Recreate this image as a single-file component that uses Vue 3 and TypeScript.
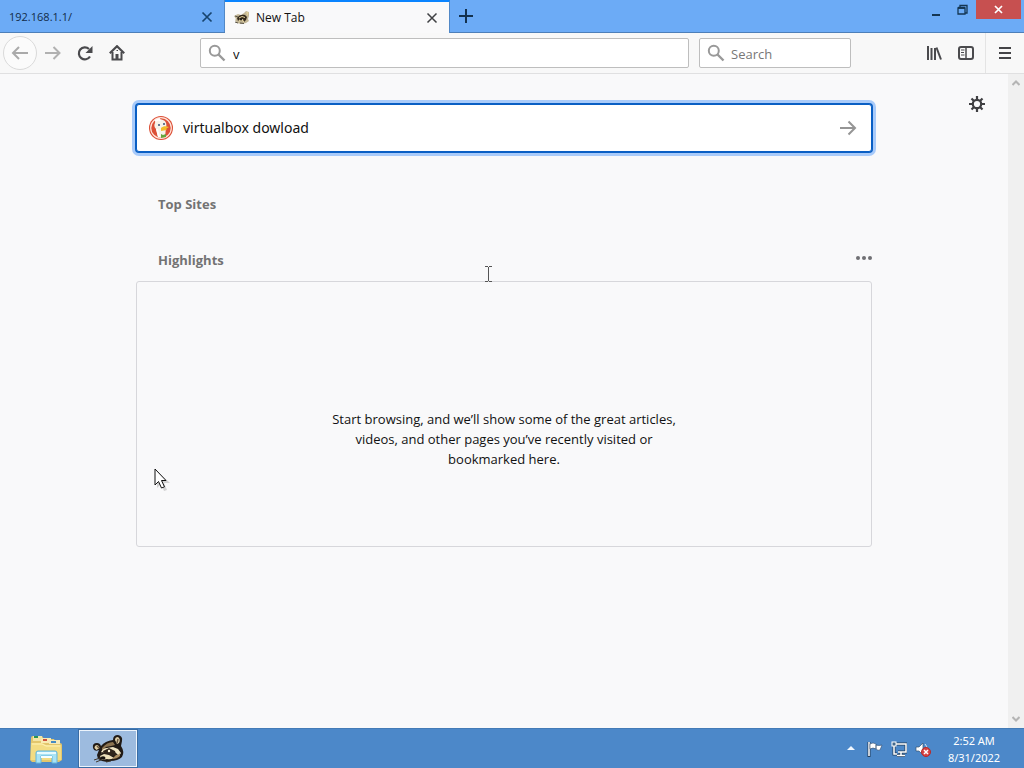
<script setup lang="ts">
import { ref } from 'vue'

const address = ref<string>('v')
const quickSearch = ref<string>('')
const query = ref<string>('virtualbox dowload')
</script>

<template>
  <div class="desktop">
    <header class="tabbar">
      <div class="tab">
        <span class="tab-title">192.168.1.1/</span>
        <button class="tab-close" aria-label="Close tab 192.168.1.1/">
          <svg width="12" height="12" viewBox="0 0 12 12"><path d="M1.5 1.5l9 9M10.5 1.5l-9 9" stroke="#17446f" stroke-width="1.7" /></svg>
        </button>
      </div>
      <div class="tab active">
        <svg class="favicon" width="16" height="16" viewBox="0 0 16 16">
          <path d="M0 6l4-2 3 1 3-2 2-2 3 1v4l-1 3 1 2-3 2-5 1-4-1-2-3 1-1z" fill="#c3b797" />
          <path d="M3 8c2-3 5-4 8-3l2 2-1 3-2 2-1-3-3 0-2 2z" fill="#33291c" />
          <path d="M5 8l3-1.500 3 1M5 11l3-1 2 2M12 3l2-.500-1 3" stroke="#e6d39c" fill="none" />
          <path d="M1 12l3 1M6 13l4 .500M1 6l3 1" stroke="#5b5548" />
          <circle cx="7" cy="9.500" r="1" fill="#151515" />
        </svg>
        <span class="tab-title">New Tab</span>
        <button class="tab-close" aria-label="Close tab New Tab">
          <svg width="12" height="12" viewBox="0 0 12 12"><path d="M1.5 1.5l9 9M10.5 1.5l-9 9" stroke="#3f4043" stroke-width="1.5" /></svg>
        </button>
      </div>
      <button class="new-tab" aria-label="New tab">
        <svg width="14" height="14" viewBox="0 0 14 14"><path d="M7 0v14M0 7h14" stroke="#13314f" stroke-width="2" /></svg>
      </button>
      <div class="window-controls">
        <button aria-label="Minimize"><svg width="10" height="14" viewBox="0 0 10 14"><path d="M1 12h8" stroke="#143653" stroke-width="2" /></svg></button>
        <button aria-label="Restore"><svg width="11" height="12" viewBox="0 0 11 12"><path d="M1 4h7v6H1zM3 3V1.500h7V9H8" fill="none" stroke="#143653" stroke-width="1.300" /><path d="M1 3.800h7" stroke="#143653" stroke-width="2" /></svg></button>
        <button class="close-window" aria-label="Close"><svg width="9" height="9" viewBox="0 0 9 9"><path d="M1 1l7 7M8 1L1 8" stroke="#fff" stroke-width="1.700" /></svg></button>
      </div>
    </header>

    <nav class="toolbar">
      <button class="back" aria-label="Back"><svg width="18" height="16" viewBox="0 0 18 16"><path d="M17 8H2M8 2L2 8l6 6" fill="none" stroke="#aaa" stroke-width="2" /></svg></button>
      <button class="nav-btn" aria-label="Forward"><svg width="16" height="16" viewBox="0 0 16 16"><path d="M0 8h14.500M8.500 2l6 6-6 6" fill="none" stroke="#b1b1b1" stroke-width="2" /></svg></button>
      <button class="nav-btn" aria-label="Reload"><svg width="16" height="16" viewBox="0 0 16 16"><path d="M13 11.500A6 6 0 1 1 12 4" fill="none" stroke="#4a4a4d" stroke-width="2.200" /><path d="M15.500 1v7h-7z" fill="#4a4a4d" /></svg></button>
      <button class="nav-btn" aria-label="Home"><svg width="16" height="16" viewBox="0 0 16 16"><path d="M.8 8.300L8 1.200l7.200 7.100" fill="none" stroke="#4a4a4d" stroke-width="2.200" /><path d="M3.500 7v7.500h9V7" fill="none" stroke="#4a4a4d" stroke-width="2" /><path d="M6.500 14V9h3v5z" fill="#4a4a4d" /><path d="M7.500 5.500h1.500" stroke="#4a4a4d" /></svg></button>
      <label class="field address">
        <svg width="18" height="18" viewBox="0 0 18 18"><circle cx="6.800" cy="6.800" r="5" fill="none" stroke="#999" stroke-width="2" /><path d="M10.500 10.500l6 6" stroke="#999" stroke-width="2.400" /></svg>
        <input v-model="address" type="text" aria-label="Address" />
      </label>
      <label class="field quick">
        <svg width="18" height="18" viewBox="0 0 18 18"><circle cx="6.800" cy="6.800" r="5" fill="none" stroke="#999" stroke-width="2" /><path d="M10.500 10.500l6 6" stroke="#999" stroke-width="2.400" /></svg>
        <input v-model="quickSearch" type="text" placeholder="Search" aria-label="Search" />
      </label>
      <div class="tools">
        <button class="nav-btn" aria-label="Library"><svg width="16" height="16" viewBox="0 0 16 16"><path d="M2 1v14M5.500 3v12M9 3v12" stroke="#4a4a4d" stroke-width="2" /><path d="M10.500 2.500l4.500 12" stroke="#4a4a4d" stroke-width="2" /></svg></button>
        <button class="nav-btn" aria-label="Sidebar"><svg width="16" height="16" viewBox="0 0 16 16"><rect x="1" y="2" width="14" height="12" rx="2" fill="none" stroke="#4a4a4d" stroke-width="2" /><path d="M8 2v12" stroke="#4a4a4d" stroke-width="1.500" /><path d="M3 5h3.500M3 7.500h3M3 10h3.500" stroke="#4a4a4d" /></svg></button>
        <button class="menu-btn" aria-label="Menu"><svg width="12" height="14" viewBox="0 0 12 14"><path d="M0 2h12M0 7h12M0 12h12" stroke="#444447" stroke-width="2" /></svg></button>
      </div>
    </nav>

    <div class="viewport">
      <main class="page">
        <button class="settings" aria-label="Settings">
          <svg width="16" height="16" viewBox="0 0 16 16"><path d="M8 0v16M0 8h16M2.500 2.500l11 11M13.500 2.500l-11 11" stroke="#3f3f42" stroke-width="2.200" /><circle cx="8" cy="8" r="4.200" fill="#f9f9fa" stroke="#3f3f42" stroke-width="2.200" /></svg>
        </button>
        <div class="content">
          <form class="search" @submit.prevent>
            <svg width="26" height="26" viewBox="0 0 26 26">
              <circle cx="13" cy="13" r="12" fill="#dc5037" /><circle cx="13" cy="13" r="10.300" fill="none" stroke="#ffe4da" stroke-width="1.200" />
              <path d="M7 8c0-3 5-5 8-3 3 1 4 4 3 8l-1 9c-3 1-5 1-7 0L8 14c-2-2-2-4-1-6z" fill="#f6f3e9" />
              <path d="M7 6l4-2 1 2M9 14l2 8" stroke="#fff" stroke-width="2" fill="none" />
              <path d="M13 13c2-2 5-2 8-1l-3 2 1 1-6 1z" fill="#f2bd2c" /><path d="M13 19l2 1 3-1v3l-5 1z" fill="#65a63c" />
              <circle cx="11" cy="10" r="1" fill="#375476" /><circle cx="16" cy="9" r="1" fill="#375476" />
            </svg>
            <input v-model="query" type="text" aria-label="Search the Web" />
            <button aria-label="Submit search"><svg width="18" height="16" viewBox="0 0 18 16"><path d="M1 8h15M9.500 1.500L16 8l-6.500 6.500" fill="none" stroke="#959595" stroke-width="2" /></svg></button>
          </form>
          <section class="top-sites"><h2>Top Sites</h2></section>
          <section class="highlights">
            <div class="section-head">
              <h2>Highlights</h2>
              <button aria-label="Highlights options"><svg width="16" height="4" viewBox="0 0 16 4"><circle cx="2" cy="2" r="2" /><circle cx="8" cy="2" r="2" /><circle cx="14" cy="2" r="2" /></svg></button>
            </div>
            <div class="empty"><p>Start browsing, and we’ll show some of the great articles, videos, and other pages you’ve recently visited or bookmarked here.</p></div>
          </section>
        </div>
      </main>
      <div class="scrollbar">
        <svg width="8" height="6" viewBox="0 0 8 6"><path d="M0.500 5L4 1.500 7.500 5" /></svg>
        <svg width="8" height="6" viewBox="0 0 8 6"><path d="M0.500 1L4 4.500 7.500 1" /></svg>
      </div>
    </div>

    <footer class="taskbar">
      <button class="task" aria-label="File Explorer">
        <svg width="34" height="30" viewBox="0 0 34 30">
          <path d="M2 4q0-2 2-2h9l2 3h10l2 4h4q2 0 2 2v15l-3 2H3l-2-2z" fill="#e3c66c" />
          <path d="M4 2h9v5H4z" fill="#f3e5a7" /><path d="M5 2h4v2H5z" fill="#299256" />
          <path d="M12 4h10v5H12z" fill="#f8eab2" /><path d="M14 5h4v2h-4z" fill="#cf513b" />
          <path d="M20 6h11v4H20z" fill="#f6e9b6" /><path d="M22 7h5v2h-5z" fill="#468ac2" />
          <path d="M2 9h11l4 2h15v15H2z" fill="#f3dc83" /><path d="M3 10h10l4 2h14" stroke="#fff2b6" fill="none" />
          <path d="M7 29V19q0-2 2-2h17q2 0 2 2v10h-5v-7H12v7z" fill="#a9e3f5" stroke="#62b5dc" />
          <path d="M8 19h19" stroke="#e6fbff" stroke-width="2" /><path d="M12 23h11" stroke="#f4ffff" stroke-width="2" />
        </svg>
      </button>
      <button class="task current" aria-label="Browser">
        <svg width="34" height="30" viewBox="0 0 34 30">
          <path d="M2 14q-1-5 4-5 3 0 4 3 4-5 12-6 0-5 5-5 5 1 4 6l-1 5q4 6 1 11-4 4-12 4l-3 1-5-1-4-2-1-4 2-5q-5 2-6-2z" fill="#211a15" />
          <path d="M3.500 14q0-3 3-3 2 1 2 3l-3 2zM24 6q0-3 3-3 3 2 1 6l-2 1z" fill="#e0cfa6" />
          <path d="M6 12l2 2M27 5l-1 4" stroke="#6d5840" stroke-width="1.500" />
          <path d="M11 14q5-6 11-6l2 3-4 1-5 1-4 4z" fill="#8c7350" />
          <path d="M10 18q2-4 6-4l6-1 5 2 3 4-2 3-3-3-5-3-5 1-5 3z" fill="#f1e5c3" />
          <path d="M12 17l6-3 6 3 1 4-4 1-4-2-4 1z" fill="#30251c" />
          <path d="M9 22l4-2 5 1 5 3q-4 2-7 1l-5 1z" fill="#efe1bb" />
          <path d="M25 21q4 0 4-3v4q-3 3-8 3z" fill="#aa8b60" />
          <circle cx="18" cy="17" r="1.200" fill="#fff4d7" /><circle cx="11" cy="19" r="1" fill="#1c1510" />
          <ellipse cx="12" cy="24" rx="2.500" ry="1.800" fill="#17120f" />
          <path d="M3 26l6-2M5 28l5-2M15 28l5-1" stroke="#40372c" />
        </svg>
      </button>
      <div class="tray">
        <svg class="up" width="8" height="5" viewBox="0 0 8 5"><path d="M4 0l4 4H0z" fill="#f2f8ff" /></svg>
        <svg width="16" height="16" viewBox="0 0 16 16"><path d="M2 1v15" stroke="#253e5b" stroke-width="3" /><path d="M2 1v14" stroke="#fff" stroke-width="1.500" /><path d="M3 3q3-2 6 0v5q-3-2-6 0zM9 4q3 1 6 0l-2 5q-2 1-4-1z" fill="#fff" stroke="#304e70" stroke-width=".6" /></svg>
        <svg width="16" height="16" viewBox="0 0 16 16"><path d="M5 3h10v8H7M10 11v3M6 14.500h8M3 5v8h3" fill="none" stroke="#24405e" stroke-width="3" /><path d="M5 3h10v8H7M10 11v3M6 14.500h8M3 5v8h3" fill="none" stroke="#fff" stroke-width="1.500" /><rect x="1" y="1" width="4" height="4" fill="#42688c" stroke="#fff" /></svg>
        <svg width="16" height="16" viewBox="0 0 16 16"><path d="M1 6h3l4-4v12l-4-4H1z" fill="#fff" stroke="#365571" stroke-width=".7" /><path d="M10 3q2 2 2 5" fill="none" stroke="#d9e6f2" /><circle cx="11" cy="11" r="4.500" fill="#d84444" stroke="#b62929" /><path d="M9 9l4 4M13 9l-4 4" stroke="#fff" stroke-width="1.500" /></svg>
        <time class="clock" datetime="2022-08-31T02:52"><span>2:52 AM</span><span>8/31/2022</span></time>
      </div>
    </footer>

    <svg class="text-cursor" width="7" height="16" viewBox="0 0 7 16"><path d="M0 .5h3M4 .5h3M3.500 1v14M0 15.500h3M4 15.500h3" stroke="#555" /></svg>
    <svg class="pointer" width="18" height="24" viewBox="0 0 18 24"><path d="M3 3v17l4-4 3 7 3-1-3-7h6z" fill="#999" opacity=".4" /><path d="M1 1v16l3.500-3.500L7.500 20l3-1.200L7.500 12.500H12z" fill="#fff" stroke="#111" /></svg>
  </div>
</template>

<style>
body { margin: 0; }
</style>

<style scoped>
.desktop { position: relative; display: flex; flex-direction: column; height: 100vh; overflow: hidden; background: #f9f9fa; color: #111; font: 12px/16px "Open Sans", "Noto Sans", sans-serif; }
button, input { font: inherit; color: inherit; }
button { display: flex; align-items: center; justify-content: center; flex: none; padding: 0; border: 0; background: none; }
input { flex: 1; min-width: 0; padding: 0; border: 0; outline: 0; background: none; }
svg { flex: none; display: block; }
.tabbar { display: flex; flex: none; height: 33px; box-sizing: border-box; background: #6cabf6; border-bottom: 1px solid #4d7fb9; }
.tab { display: flex; align-items: center; width: 225px; box-sizing: border-box; padding: 2px 9px 0 9px; color: #122c49; font-size: 11px; border-right: 1px solid #5188c7; }
.tab.active { height: 33px; padding-top: 0; border-top: 2px solid #0a84ff; background: #f9f9fa; color: #111; font-size: 12px; }
.favicon { margin-right: 6px; }
.tab-title { flex: 1; }
.tab-close { width: 16px; height: 20px; }
.new-tab { width: 32px; }
.window-controls { display: flex; margin-left: auto; height: 19px; padding-right: 3px; }
.window-controls button { width: 26px; padding-right: 2px; box-sizing: border-box; }
.window-controls .close-window { width: 45px; padding: 0; background: #c75050; }
.toolbar { display: flex; align-items: center; flex: none; height: 41px; box-sizing: border-box; padding-left: 3px; background: #f8f8f8; border-bottom: 1px solid #e0e0e1; }
.back { width: 34px; height: 34px; border: 1px solid #dadada; border-radius: 50%; background: #fbfbfb; }
.nav-btn { width: 32px; height: 32px; }
.field { display: flex; align-items: center; gap: 7px; box-sizing: border-box; height: 30px; padding: 0 7px; border: 1px solid #bebebe; border-radius: 2px; background: #fff; font-size: 13px; }
.field input { padding-top: 2px; }
.address { flex: 1; margin-left: 67px; }
.quick { width: 152px; margin: 0 67px 0 10px; gap: 6px; }
.quick input::placeholder { color: #777; opacity: 1; }
.tools { display: flex; align-items: center; align-self: stretch; }
.menu-btn { align-self: stretch; width: 39px; margin-left: 3px; border-left: 1px solid #e4e4e4; }
.viewport { display: flex; flex: 1; min-height: 0; }
.page { position: relative; flex: 1; overflow: hidden; }
.settings { position: absolute; top: 18px; right: 19px; width: 24px; height: 24px; }
.content { max-width: 736px; margin: 0 auto; padding-top: 30px; }
.search { display: flex; align-items: center; gap: 9px; height: 48px; box-sizing: border-box; padding: 0 14px 0 11px; border: 1px solid #0a5fc4; border-radius: 3px; box-shadow: 0 0 0 1px #0a5fc4, 0 0 0 4px #a9cbfa; background: #fff; font-family: "Noto Sans", sans-serif; font-size: 14px; }
.search input { line-height: 24px; }
h2 { margin: 0; padding-left: 22px; color: #737373; font-size: 13px; line-height: 20px; font-weight: 700; }
.top-sites { margin-top: 42px; }
.highlights { margin-top: 36px; }
.section-head { display: flex; align-items: center; justify-content: space-between; }
.section-head button { height: 16px; fill: #707073; align-self: flex-start; }
.empty { display: flex; align-items: center; justify-content: center; height: 264px; margin-top: 11px; border: 1px solid #d7d7db; border-radius: 3px; }
.empty p { max-width: 346px; margin: 50px 0 0; text-align: center; font-size: 13px; line-height: 20px; }
.scrollbar { display: flex; flex: none; flex-direction: column; align-items: center; justify-content: space-between; width: 16px; padding: 6px 0; box-sizing: border-box; background: #f0f0f0; }
.scrollbar path { fill: none; stroke: #b4b4b4; stroke-width: 2; }
.taskbar { display: flex; flex: none; height: 40px; padding-left: 14px; box-sizing: border-box; background: #4c88c9; border-top: 1px solid #447bb6; color: #fff; }
.task { width: 64px; }
.task.current { width: 60px; border: 1px solid #d8e6f5; outline: 1px solid #396ca4; outline-offset: -1px; box-shadow: inset 0 0 0 1px #edf4fc; background: #9dbbdf; }
.tray { display: flex; align-items: center; gap: 8px; margin-left: auto; padding-right: 20px; }
.up { margin-right: 4px; }
.clock { display: flex; flex-direction: column; width: 60px; margin-left: 5px; text-align: center; font-family: "Noto Sans", sans-serif; font-size: 11px; line-height: 17px; }
.text-cursor { position: absolute; left: 485px; top: 266px; }
.pointer { position: absolute; left: 154px; top: 468px; }
</style>
